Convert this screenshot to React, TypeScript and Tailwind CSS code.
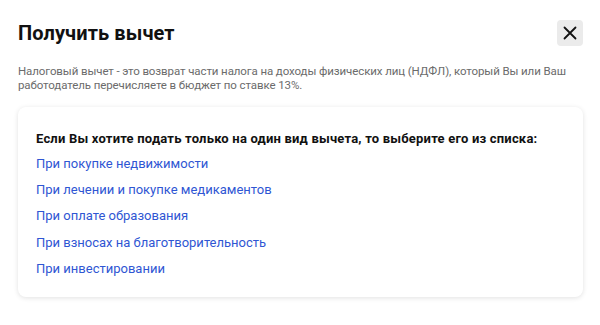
import React from "react";

const links = [
  "При покупке недвижимости",
  "При лечении и покупке медикаментов",
  "При оплате образования",
  "При взносах на благотворительность",
  "При инвестировании",
];

export default function App() {
  return (
    <div
      className="w-[600px] h-[325px] bg-white px-[18px] pt-[20px]"
      style={{ fontFamily: "Roboto, 'Noto Sans', sans-serif" }}
    >
      <div className="flex items-start justify-between">
        <h1 className="mt-[1px] text-[20px] leading-[24px] font-bold text-[#111111] tracking-[0.1px]">
          Получить вычет
        </h1>
        <button className="w-[26px] h-[26px] rounded-[4px] bg-[#ebebeb] flex items-center justify-center mr-[-1px]">
          <svg width="14" height="14" viewBox="0 0 14 14" fill="none">
            <path d="M1.5 1.5L12.5 12.5M12.5 1.5L1.5 12.5" stroke="#111" strokeWidth="1.8" strokeLinecap="round" />
          </svg>
        </button>
      </div>
      <p className="mt-[18px] text-[11.5px] leading-[14px] text-[#6b6b6b] tracking-[-0.1px]">
        Налоговый вычет - это возврат части налога на доходы физических лиц (НДФЛ), который Вы или Ваш работодатель перечисляете в бюджет по ставке 13%.
      </p>
      <div className="mt-[15px] w-[565px] rounded-[8px] bg-white shadow-[0_1px_5px_rgba(0,0,0,0.12)] px-[18px] pt-[24px] pb-[20px]">
        <div className="text-[13px] leading-[16px] font-bold text-[#111111] tracking-[0.2px]">
          Если Вы хотите подать только на один вид вычета, то выберите его из списка:
        </div>
        <div className="mt-[9px] flex flex-col gap-[10.2px]">
          {links.map((l) => (
            <a key={l} href="#" className="text-[13px] leading-[16px] text-[#2f56d3]">
              {l}
            </a>
          ))}
        </div>
      </div>
    </div>
  );
}
